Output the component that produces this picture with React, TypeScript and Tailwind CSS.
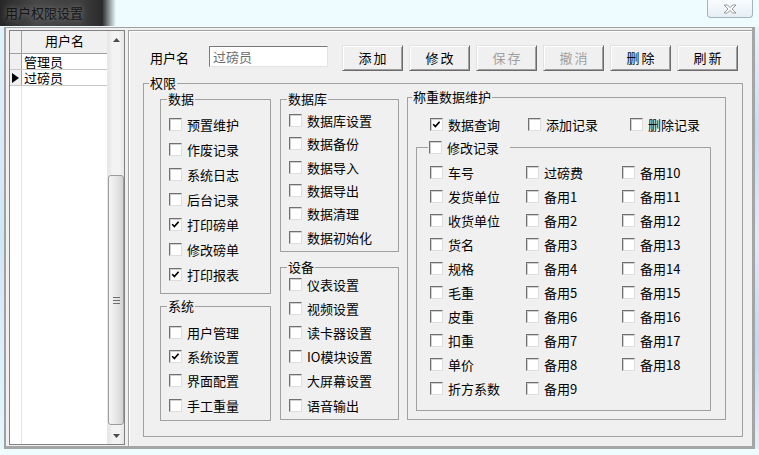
import type { ReactNode } from 'react';

function Box({ on = false }: { on?: boolean }) {
  return (
    <span className="flex w-[13px] h-[13px] shrink-0 items-center justify-center border border-t-[#707070] border-l-[#707070] border-r-[#dedede] border-b-[#dedede] bg-white shadow-[inset_1px_1px_0_#d0d0d0]">
      {on && (
        <svg width="9" height="9" viewBox="0 0 9 9">
          <polyline points="1.2,4.2 3.4,6.6 7.6,1.8" fill="none" stroke="#000" strokeWidth="1.7" />
        </svg>
      )}
    </span>
  );
}

function Item({ label, on, className = '' }: { label: string; on?: boolean; className?: string }) {
  return (
    <div className={`flex items-center ${className}`}>
      <Box on={on} />
      <span className="ml-[5px] leading-none whitespace-nowrap">{label}</span>
    </div>
  );
}

function Group({ title, legend = 'ml-[6px]', className = '', children }: { title: ReactNode; legend?: string; className?: string; children?: ReactNode }) {
  return (
    <fieldset className={`border border-[#a0a0a0] min-w-0 ${className}`}>
      <legend className={`px-px leading-[14px] ${legend}`}>{title}</legend>
      {children}
    </fieldset>
  );
}

function Btn({ label, disabled }: { label: string; disabled?: boolean }) {
  return (
    <div
      className={`w-[61px] h-[26px] flex items-center justify-center tracking-[2px] pl-[2px] border border-t-[#e2e2e2] border-l-[#e2e2e2] border-r-[#6b6b6b] border-b-[#6b6b6b] shadow-[inset_1px_1px_0_#fff,inset_-1px_-1px_0_#a0a0a0] ${disabled ? 'text-[#a0a0a0]' : 'text-black'}`}
    >
      {label}
    </div>
  );
}

const dataItems: [string, boolean][] = [
  ['预置维护', false], ['作废记录', false], ['系统日志', false], ['后台记录', false],
  ['打印磅单', true], ['修改磅单', false], ['打印报表', true],
];
const sysItems: [string, boolean][] = [['用户管理', false], ['系统设置', true], ['界面配置', false], ['手工重量', false]];
const dbItems = ['数据库设置', '数据备份', '数据导入', '数据导出', '数据清理', '数据初始化'];
const devItems = ['仪表设置', '视频设置', '读卡器设置', 'IO模块设置', '大屏幕设置', '语音输出'];
const editItems = [
  '车号', '发货单位', '收货单位', '货名', '规格', '毛重', '皮重', '扣重', '单价', '折方系数',
  '过磅费', '备用1', '备用2', '备用3', '备用4', '备用5', '备用6', '备用7', '备用8', '备用9',
  '备用10', '备用11', '备用12', '备用13', '备用14', '备用15', '备用16', '备用17', '备用18',
];

function UserGrid() {
  return (
    <div className="w-[116px] h-[415px] border border-[#828282] flex bg-white">
      <div className="w-[97px] flex flex-col">
        <div className="flex h-[23px] bg-[#f0f0f0] border-b border-[#a0a0a0]">
          <div className="w-[12px] border-r border-[#a0a0a0]" />
          <div className="flex-1 flex items-center justify-center pb-[2px]">用户名</div>
        </div>
        <div className="flex h-[16px] border-b border-[#c8c8c8]">
          <div className="w-[12px] bg-[#f0f0f0] border-r border-[#a0a0a0]" />
          <div className="flex-1 flex items-center pl-[2px] leading-none">管理员</div>
        </div>
        <div className="flex h-[16px] border-b border-[#c8c8c8]">
          <div className="w-[12px] bg-[#f0f0f0] border-r border-[#a0a0a0] flex items-center justify-center">
            <svg width="7" height="10" viewBox="0 0 7 10"><polygon points="0,0 7,5 0,10" fill="#000" /></svg>
          </div>
          <div className="flex-1 flex items-center pl-[2px] leading-none">过磅员</div>
        </div>
        <div className="flex-1 flex">
          <div className="w-[12px] border-r border-[#e4e4e4]" />
        </div>
      </div>
      {/* scrollbar */}
      <div className="w-[17px] flex flex-col border-l border-[#e8e8e8] bg-[linear-gradient(to_right,#e6e6e6,#f3f3f3_30%,#f3f3f3_70%,#e6e6e6)]">
        <div className="h-[17px] flex items-center justify-center">
          <svg width="7" height="4" viewBox="0 0 7 4"><polygon points="0,4 3.5,0 7,4" fill="#4d4d4d" /></svg>
        </div>
        <div className="flex-1 flex flex-col">
          <div className="mt-[127px] h-[250px] rounded-[3px] border border-[#9b9b9b] bg-[linear-gradient(to_right,#f6f6f6,#e6e6e6_55%,#d2d2d2)] flex flex-col items-center justify-center gap-[2px]">
            <span className="w-[7px] h-px bg-[#6d6d6d]" />
            <span className="w-[7px] h-px bg-[#6d6d6d]" />
            <span className="w-[7px] h-px bg-[#6d6d6d]" />
          </div>
        </div>
        <div className="h-[17px] flex items-center justify-center">
          <svg width="7" height="4" viewBox="0 0 7 4"><polygon points="0,0 3.5,4 7,0" fill="#4d4d4d" /></svg>
        </div>
      </div>
    </div>
  );
}

export default function App() {
  return (
    <div className="w-[759px] h-[455px] overflow-hidden bg-[#eefcff] font-['Noto_Sans_CJK_SC',sans-serif] text-[13px] text-black flex flex-col">
      {/* title bar */}
      <div className="h-[27px] flex items-start shrink-0">
        <div className="w-[116px] h-[26px] flex items-center pl-[5px] text-[#151515] bg-[linear-gradient(to_right,#262626_0%,#474747_30%,#3e3e3e_70%,#2a2a2a_88%,#eefcff_100%)] [text-shadow:0_0_6px_#8c8c8c]">
          用户权限设置
        </div>
        <div className="ml-auto mr-[6px] w-[46px] h-[18px] rounded-b-[4px] border border-t-0 border-[#a4b3bd] bg-[linear-gradient(#f8fcfe,#e6eff4)] flex items-center justify-center">
          <svg width="14" height="10" viewBox="0 0 14 10">
            <path d="M1 1 H4.5 L7 3.6 L9.5 1 H13 L9 5 L13 9 H9.5 L7 6.4 L4.5 9 H1 L5 5 Z" fill="#fdfdfd" stroke="#8d8d8d" strokeWidth="0.9" />
          </svg>
        </div>
      </div>

      <div className="flex h-[422px]">
        <div className="w-[4px] h-full bg-[linear-gradient(#dff2fc,#cfe6f7_50%,#e6f6fd)]" />
        <div className="w-[751px] h-full flex bg-[#f0f0f0] border-l-2 border-t border-r-[3px] border-b-[3px] border-l-[#a0a0a0] border-t-[#a0a0a0] border-r-[#a5a5a5] border-b-[#a5a5a5] pl-[3px] pt-[2px]">
          <UserGrid />

          {/* right panel */}
          <div className="ml-[3px] w-[624px] h-[416px] border-l border-t border-[#a0a0a0] shadow-[inset_1px_1px_0_#fff] flex flex-col">
            <div className="mt-[14px] pl-[21px] flex items-start">
              <div className="w-[59px] h-[26px] flex items-center">用户名</div>
              <div className="mt-px w-[119px] h-[21px] flex items-center pl-[3px] bg-white text-[#6d6d6d] border border-t-[#7a7a7a] border-l-[#7a7a7a] border-r-[#e3e3e3] border-b-[#e3e3e3]">
                过磅员
              </div>
              <div className="ml-[14px] flex gap-[6px]">
                <Btn label="添加" />
                <Btn label="修改" />
                <Btn label="保存" disabled />
                <Btn label="撤消" disabled />
                <Btn label="删除" />
                <Btn label="刷新" />
              </div>
            </div>

            <Group title="权限" legend="ml-[5px]" className="ml-[14px] mt-[5px] w-[600px] h-[361px]">
              <div className="flex items-start pl-[16px] pt-[2px]">
                {/* column A */}
                <div className="w-[111px] flex flex-col">
                  <Group title="数据" className="h-[202px]">
                    <div className="pt-[6px] pl-[8px]">
                      {dataItems.map(([t, on]) => (
                        <Item key={t} label={t} on={on} className="h-[25px]" />
                      ))}
                    </div>
                  </Group>
                  <Group title="系统" className="mt-[5px] h-[122px]">
                    <div className="pt-[7px] pl-[8px]">
                      {sysItems.map(([t, on]) => (
                        <Item key={t} label={t} on={on} className="h-[24.3px]" />
                      ))}
                    </div>
                  </Group>
                </div>

                {/* column B */}
                <div className="ml-[9px] w-[119px] flex flex-col">
                  <Group title="数据库" className="h-[160px]">
                    <div className="pt-[3px] pl-[8px]">
                      {dbItems.map((t) => (
                        <Item key={t} label={t} className="h-[23.3px]" />
                      ))}
                    </div>
                  </Group>
                  <Group title="设备" className="mt-[8px] h-[160px]">
                    <div className="-mt-[2px] pl-[8px]">
                      {devItems.map((t) => (
                        <Item key={t} label={t} className="h-[24.2px]" />
                      ))}
                    </div>
                  </Group>
                </div>

                {/* column C */}
                <div className="ml-[8px] -mt-[2px] w-[319px]">
                  <Group title="称重数据维护" legend="ml-[4px]" className="h-[330px]">
                    <div className="pt-[8px] pl-[22px] flex">
                      <Item label="数据查询" on className="h-[24px] w-[98px]" />
                      <Item label="添加记录" className="h-[24px] w-[102px]" />
                      <Item label="删除记录" className="h-[24px]" />
                    </div>
                    <fieldset className="ml-[8px] mt-[4px] w-[295px] h-[271px] border border-[#a0a0a0] min-w-0">
                      <legend className="ml-[11px] pl-px pr-[11px]">
                        <div className="flex items-center h-[14px]">
                          <Box />
                          <span className="ml-[5px] leading-none">修改记录</span>
                        </div>
                      </legend>
                      <div className="pt-[6px] pl-[13px] grid grid-flow-col grid-rows-[repeat(10,24px)] grid-cols-[96px_96px_96px]">
                        {editItems.map((t) => (
                          <Item key={t} label={t} />
                        ))}
                      </div>
                    </fieldset>
                  </Group>
                </div>
              </div>
            </Group>
          </div>
        </div>
        <div className="w-[4px] h-full bg-[linear-gradient(#e4f4fd,#c6dcf4_25%,#dcecfb_50%,#c2d8f3_75%,#e0f0fc)]" />
      </div>
    </div>
  );
}
